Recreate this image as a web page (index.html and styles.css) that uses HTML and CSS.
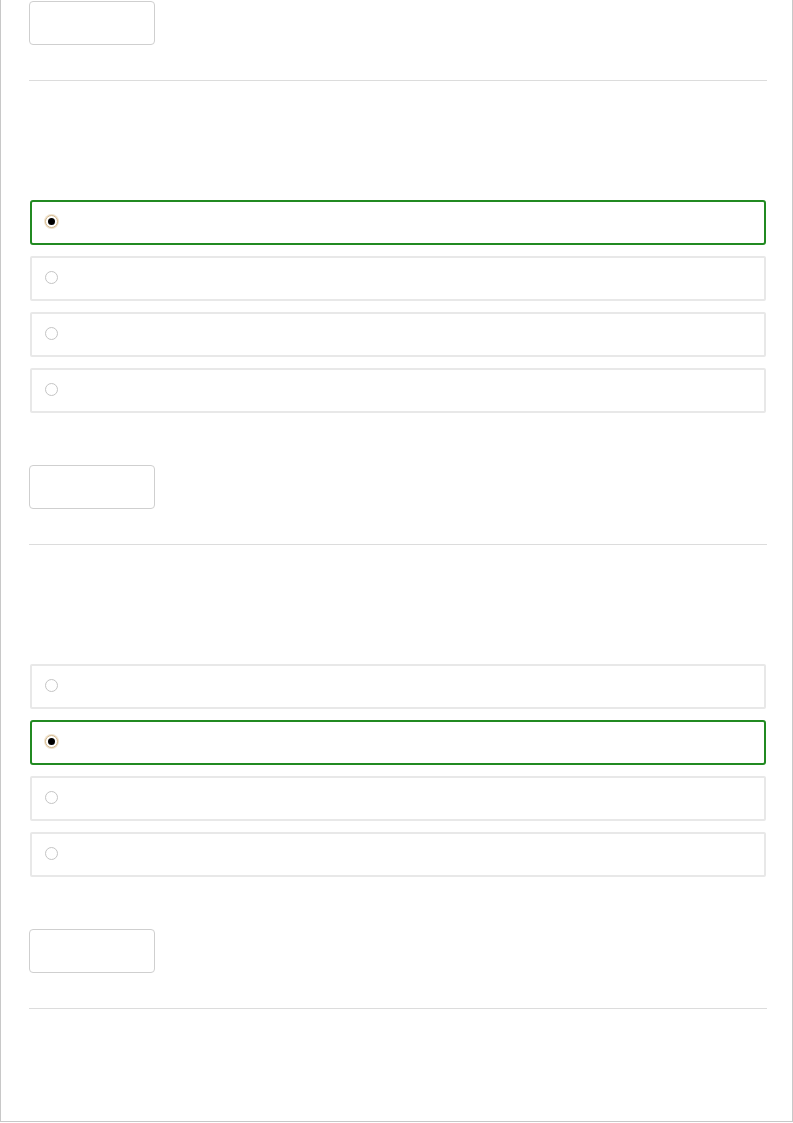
FILE: index.html
```html
<!DOCTYPE html>
<html lang="en">
<head>
  <meta charset="UTF-8" />
  <title>Quiz</title>
  <link rel="stylesheet" href="styles.css">
</head>
<body>
  <div class="page">
    <div class="btn"></div>

    <div class="question">
      <hr class="divider" />
      <div class="prompt"></div>
      <ul class="options">
        <li class="option selected"><span class="radio"></span></li>
        <li class="option"><span class="radio"></span></li>
        <li class="option"><span class="radio"></span></li>
        <li class="option"><span class="radio"></span></li>
      </ul>
      <div class="btn"></div>
    </div>

    <div class="question">
      <hr class="divider" />
      <div class="prompt"></div>
      <ul class="options">
        <li class="option"><span class="radio"></span></li>
        <li class="option selected"><span class="radio"></span></li>
        <li class="option"><span class="radio"></span></li>
        <li class="option"><span class="radio"></span></li>
      </ul>
      <div class="btn"></div>
    </div>

    <hr class="divider" />
  </div>
</body>
</html>
```

FILE: styles.css
```css
* { box-sizing: border-box; margin: 0; padding: 0; }
body {
  font-family: 'Liberation Sans', Arial, sans-serif;
  background: #fff;
}
.page {
  width: 793px;
  height: 1122px;
  border: 1px solid #c8c8c8;
  border-top: none;
  padding: 1px 25px 0 28px;
}
.btn {
  width: 126px;
  height: 44px;
  border: 1px solid #cfcfcf;
  border-radius: 4px;
  background: #fff;
}
.divider {
  border: none;
  border-top: 1px solid #dcdcdc;
  margin-top: 35px;
}
.prompt { height: 119px; }
.options {
  list-style: none;
  display: flex;
  flex-direction: column;
  gap: 11px;
  margin: 0 1px 52px;
}
.option {
  height: 45px;
  border: 2px solid #e8e8e8;
  border-radius: 2px;
  display: flex;
  align-items: center;
  padding: 0 0 2px 13px;
}
.option.selected { border-color: #218a21; border-radius: 3px; }
.radio {
  width: 13px;
  height: 13px;
  border-radius: 50%;
  border: 1px solid #c4c4c4;
  background: #fff;
  display: flex;
  align-items: center;
  justify-content: center;
}
.selected .radio { border-color: #d4b88c; box-shadow: 0 0 0 1px #efe3cf; }
.selected .radio::after {
  content: '';
  width: 7px;
  height: 7px;
  border-radius: 50%;
  background: #000;
}
```
